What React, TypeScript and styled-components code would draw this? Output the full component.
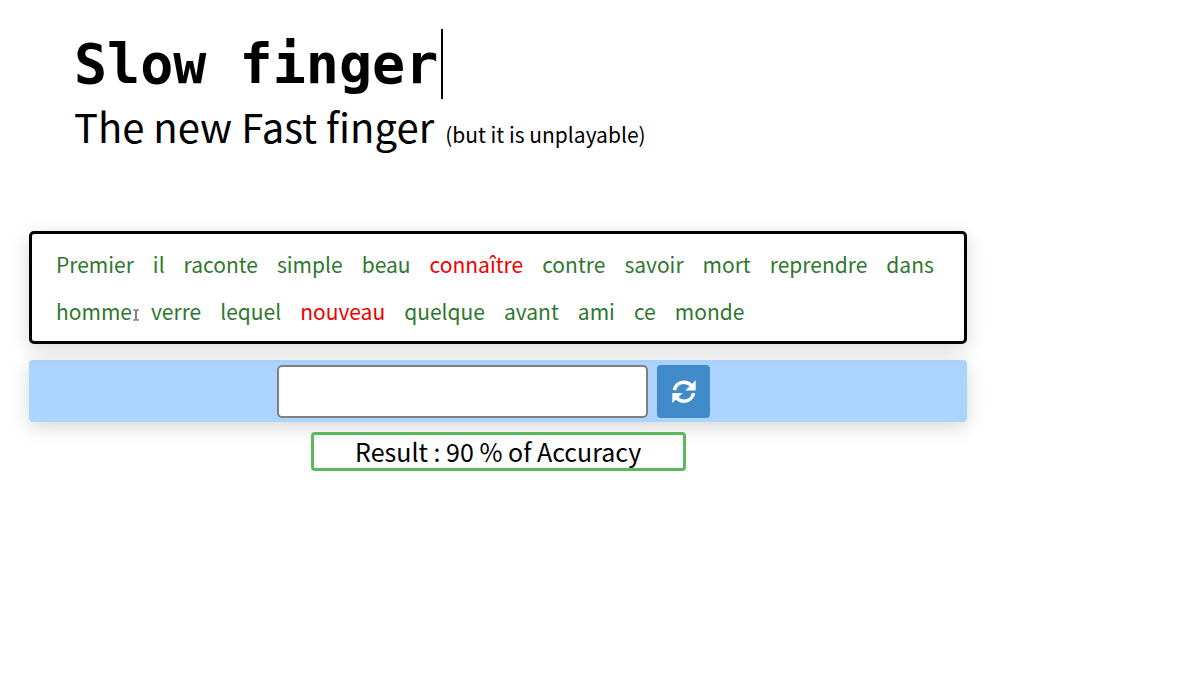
import React from "react";
import styled, { createGlobalStyle } from "styled-components";

const GlobalStyle = createGlobalStyle`
  * { box-sizing: border-box; }
  body {
    margin: 0;
    background: #fff;
    color: #000;
    font-family: "Noto Sans CJK SC", "Noto Sans", sans-serif;
  }
`;

const Header = styled.header`
  padding: 29px 74px 0;
`;

const Title = styled.h1`
  width: fit-content;
  margin: 0;
  padding-right: 3px;
  border-right: 2px solid #000;
  font: bold 55px/70px "DejaVu Sans Mono", monospace;
  white-space: nowrap;
`;

const Tagline = styled.p`
  margin: 0;
  font-size: 40px;
  line-height: 54px;
`;

const Note = styled.small`
  margin-left: 2px;
  font-size: 21px;
`;

const Game = styled.main`
  display: flex;
  flex-direction: column;
  width: calc(80% - 20px);
  margin: 70px 0 0 29px;
`;

const WordPanel = styled.section`
  position: relative;
  display: flex;
  flex-wrap: wrap;
  column-gap: 19px;
  padding: 7px 24px 6px;
  border: 3px solid #000;
  border-radius: 5px;
  background: #fff;
  box-shadow: 0 5px 20px rgba(0, 0, 0, 0.16);
`;

const Word = styled.span<{ $wrong?: boolean }>`
  color: ${(p) => (p.$wrong ? "#ee0000" : "#2f772f")};
  font-size: 21px;
  line-height: 47px;
`;

const Pointer = styled.svg`
  position: absolute;
  left: 101px;
  top: 75px;
  width: 6px;
  height: 12px;
`;

const EntryBar = styled.form`
  display: flex;
  justify-content: center;
  gap: 9px;
  margin-top: 16px;
  padding: 5px 9px 4px 0;
  border-radius: 4px;
  background: #abd4ff;
  box-shadow: 0 5px 20px rgba(0, 0, 0, 0.16);
`;

const Entry = styled.input`
  width: 371px;
  height: 53px;
  padding: 0 12px;
  border: 2px solid #7f7f7f;
  border-radius: 5px;
  background: #fff;
  font: inherit;
  font-size: 25px;
`;

const Restart = styled.button`
  display: flex;
  align-items: center;
  justify-content: center;
  width: 53px;
  height: 53px;
  padding: 0;
  border: 0;
  border-radius: 4px;
  background: #428bca;
  color: #fff;
`;

const Result = styled.output`
  align-self: center;
  width: 40%;
  margin-top: 10px;
  border: 3px solid #5cb85c;
  border-radius: 4px;
  font-size: 25px;
  line-height: 33px;
  text-align: center;
`;

const words =
  "Premier il raconte simple beau connaître contre savoir mort reprendre dans homme verre lequel nouveau quelque avant ami ce monde".split(" ");
const mistakes = ["connaître", "nouveau"];

function RefreshIcon() {
  const arrow = (
    <>
      <path d="M2.4 10.2C3.4 5.4 7.2 2.2 11.8 2.2c3 0 5.4 1.1 7.4 3.2" fill="none" stroke="currentColor" strokeWidth="3.5" />
      <path d="M23.7.3v10.2H13.3z" fill="currentColor" />
    </>
  );
  return (
    <svg width="24" height="24" viewBox="0 0 24 24" aria-hidden="true">
      {arrow}
      <g transform="rotate(180 12 11.7)">{arrow}</g>
    </svg>
  );
}

export default function App() {
  return (
    <>
      <GlobalStyle />
      <Header>
        <Title>Slow finger</Title>
        <Tagline>
          The new Fast finger <Note>(but it is unplayable)</Note>
        </Tagline>
      </Header>
      <Game>
        <WordPanel>
          {words.map((word) => (
            <Word key={word} $wrong={mistakes.includes(word)}>
              {word}
            </Word>
          ))}
          <Pointer viewBox="0 0 6 12" fill="none" stroke="#000" aria-hidden="true">
            <path d="M0.5 1h2M3.5 1h2M3 1.5v9M0.5 11h2M3.5 11h2" />
          </Pointer>
        </WordPanel>
        <EntryBar onSubmit={(e) => e.preventDefault()}>
          <Entry type="text" aria-label="Type the words" />
          <Restart type="button" aria-label="Restart">
            <RefreshIcon />
          </Restart>
        </EntryBar>
        <Result>Result : 90 % of Accuracy</Result>
      </Game>
    </>
  );
}
